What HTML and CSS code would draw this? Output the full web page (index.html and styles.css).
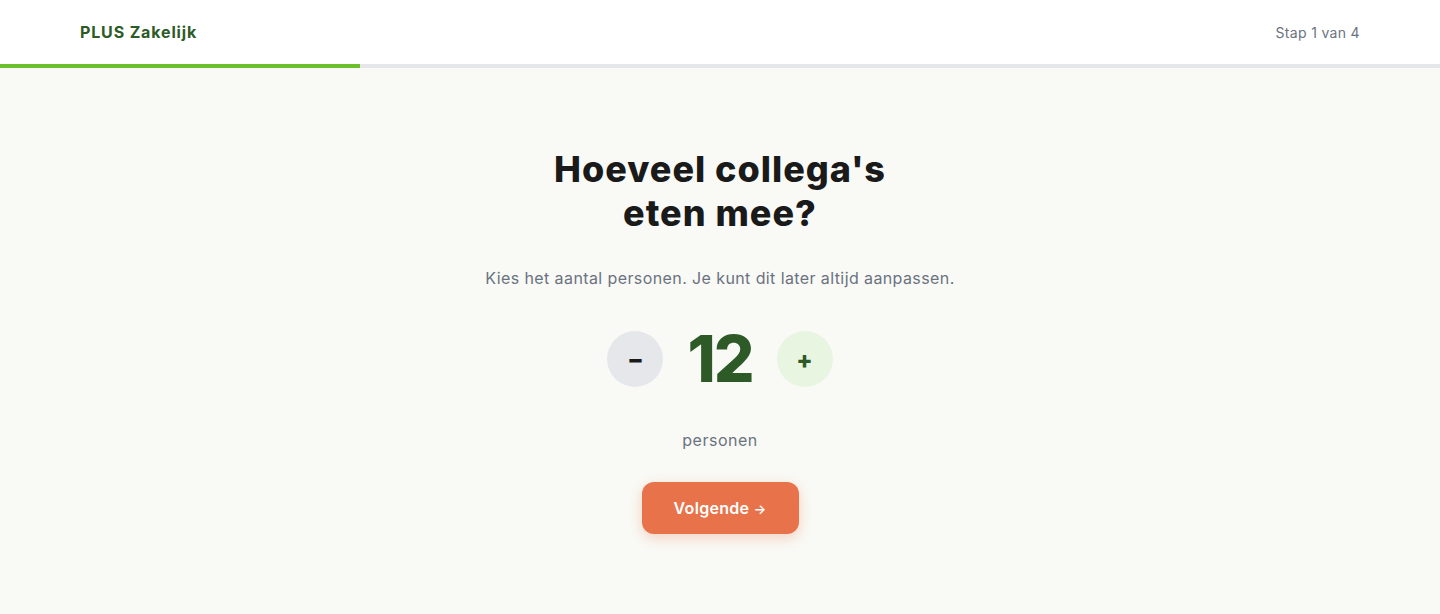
FILE: index.html
```html
<!DOCTYPE html>
<html lang="nl">
<head>
<meta charset="utf-8">
<title>PLUS Zakelijk</title>
<link rel="stylesheet" href="styles.css">
</head>
<body>
<header class="topbar">
  <div class="brand">PLUS Zakelijk</div>
  <div class="step">Stap 1 van 4</div>
</header>
<div class="progress"><div class="progress-fill" style="width:25%"></div></div>
<main class="content">
  <h1 class="title">Hoeveel collega's<br>eten mee?</h1>
  <p class="subtitle">Kies het aantal personen. Je kunt dit later altijd aanpassen.</p>
  <div class="counter">
    <button class="round minus" type="button">&minus;</button>
    <span class="count">12</span>
    <button class="round plus" type="button">+</button>
  </div>
  <div class="unit">personen</div>
  <button class="next" type="button">Volgende <span class="arrow">&rarr;</span></button>
</main>
</body>
</html>
```
FILE: styles.css
```css
* { box-sizing: border-box; }
html, body { margin: 0; padding: 0; }
body {
  font-family: "Inter", "Noto Sans", sans-serif;
  background: #f9faf6;
  color: #1a1a1a;
  min-height: 614px;
}
.topbar {
  height: 64px;
  background: #ffffff;
  display: flex;
  align-items: center;
  justify-content: space-between;
  padding: 0 80px;
}
.brand {
  font-weight: 700;
  font-size: 16px;
  letter-spacing: 0.85px;
  color: #2d5a27;
}
.step {
  font-size: 14px;
  letter-spacing: 0.33px;
  color: #6b7280;
}
.progress {
  height: 4px;
  background: #e5e7eb;
}
.progress-fill {
  height: 100%;
  background: #6cc02c;
}
.content {
  display: flex;
  flex-direction: column;
  align-items: center;
  padding-top: 79px;
}
.title {
  margin: 0;
  font-size: 36px;
  line-height: 44px;
  font-weight: 800;
  letter-spacing: 1px;
  text-align: center;
  color: #1a1a1a;
}
.subtitle {
  margin: 31px 0 0;
  font-size: 16px;
  line-height: 24px;
  letter-spacing: 0.4px;
  color: #6b7280;
}
.counter {
  margin-top: 33px;
  display: flex;
  align-items: center;
  gap: 24px;
}
.round {
  width: 56px;
  height: 56px;
  border-radius: 50%;
  border: none;
  display: flex;
  align-items: center;
  justify-content: center;
  font-family: inherit;
  font-size: 24px;
  font-weight: 800;
  padding: 0;
}
.minus { background: #e5e7eb; color: #1a1a1a; }
.plus { background: #e8f5e0; color: #2d5a27; }
.count {
  font-size: 64px;
  font-weight: 800;
  color: #2d5a27;
  line-height: 72px;
  letter-spacing: -2px;
  text-align: center;
}
.unit {
  margin-top: 35px;
  font-size: 16px;
  letter-spacing: 0.5px;
  color: #6b7280;
}
.next {
  margin-top: 32px;
  width: 157px;
  height: 52px;
  border: none;
  border-radius: 12px;
  background: #e8734a;
  color: #ffffff;
  font-family: inherit;
  font-size: 16px;
  font-weight: 600;
  letter-spacing: 0.3px;
  box-shadow: 0 4px 14px rgba(232, 115, 74, 0.3);
}
.arrow {
  font-size: 13px;
}
```
